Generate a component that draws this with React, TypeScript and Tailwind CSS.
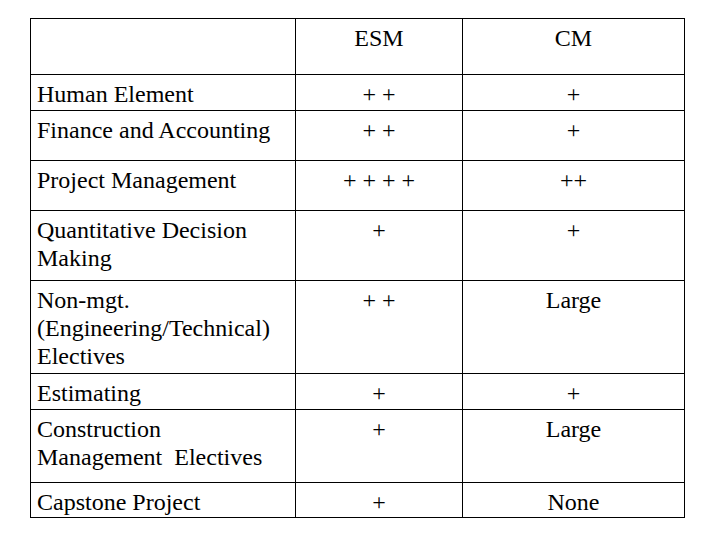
const rows: { label: string[]; esm: string; cm: string; h: string }[] = [
  { label: ["Human Element"], esm: "+ +", cm: "+", h: "h-[35px]" },
  { label: ["Finance and Accounting"], esm: "+ +", cm: "+", h: "h-[49px]" },
  { label: ["Project Management"], esm: "+ + + +", cm: "++", h: "h-[49px]" },
  { label: ["Quantitative Decision", "Making"], esm: "+", cm: "+", h: "h-[69px]" },
  {
    label: ["Non-mgt.", "(Engineering/Technical)", "Electives"],
    esm: "+ +",
    cm: "Large",
    h: "h-[92px]",
  },
  { label: ["Estimating"], esm: "+", cm: "+", h: "h-[35px]" },
  { label: ["Construction", "Management\u00a0 Electives"], esm: "+", cm: "Large", h: "h-[72px]" },
  { label: ["Capstone Project"], esm: "+", cm: "None", h: "h-[34px]" },
];

function Cell({ children, className = "" }: { children?: React.ReactNode; className?: string }) {
  return <div className={`bg-white pt-[5px] ${className}`}>{children}</div>;
}

export default function App() {
  return (
    <div className="w-[720px] h-[540px] bg-white pt-[18px] pl-[30px] [font-family:'Liberation_Serif','Times_New_Roman',serif] text-[24px] leading-[28px] text-black">
      <div className="w-[655px] grid grid-cols-[264px_166px_221px] gap-px bg-black p-px">
        <Cell className="h-[55px]" />
        <Cell className="h-[55px] text-center">ESM</Cell>
        <Cell className="h-[55px] text-center">CM</Cell>
        {rows.map((r) => (
          <div key={r.label.join(" ")} className="contents">
            <Cell className={`${r.h} pl-[6px]`}>
              {r.label.map((l) => (
                <div key={l}>{l}</div>
              ))}
            </Cell>
            <Cell className={`${r.h} text-center`}>{r.esm}</Cell>
            <Cell className={`${r.h} text-center`}>{r.cm}</Cell>
          </div>
        ))}
      </div>
    </div>
  );
}
